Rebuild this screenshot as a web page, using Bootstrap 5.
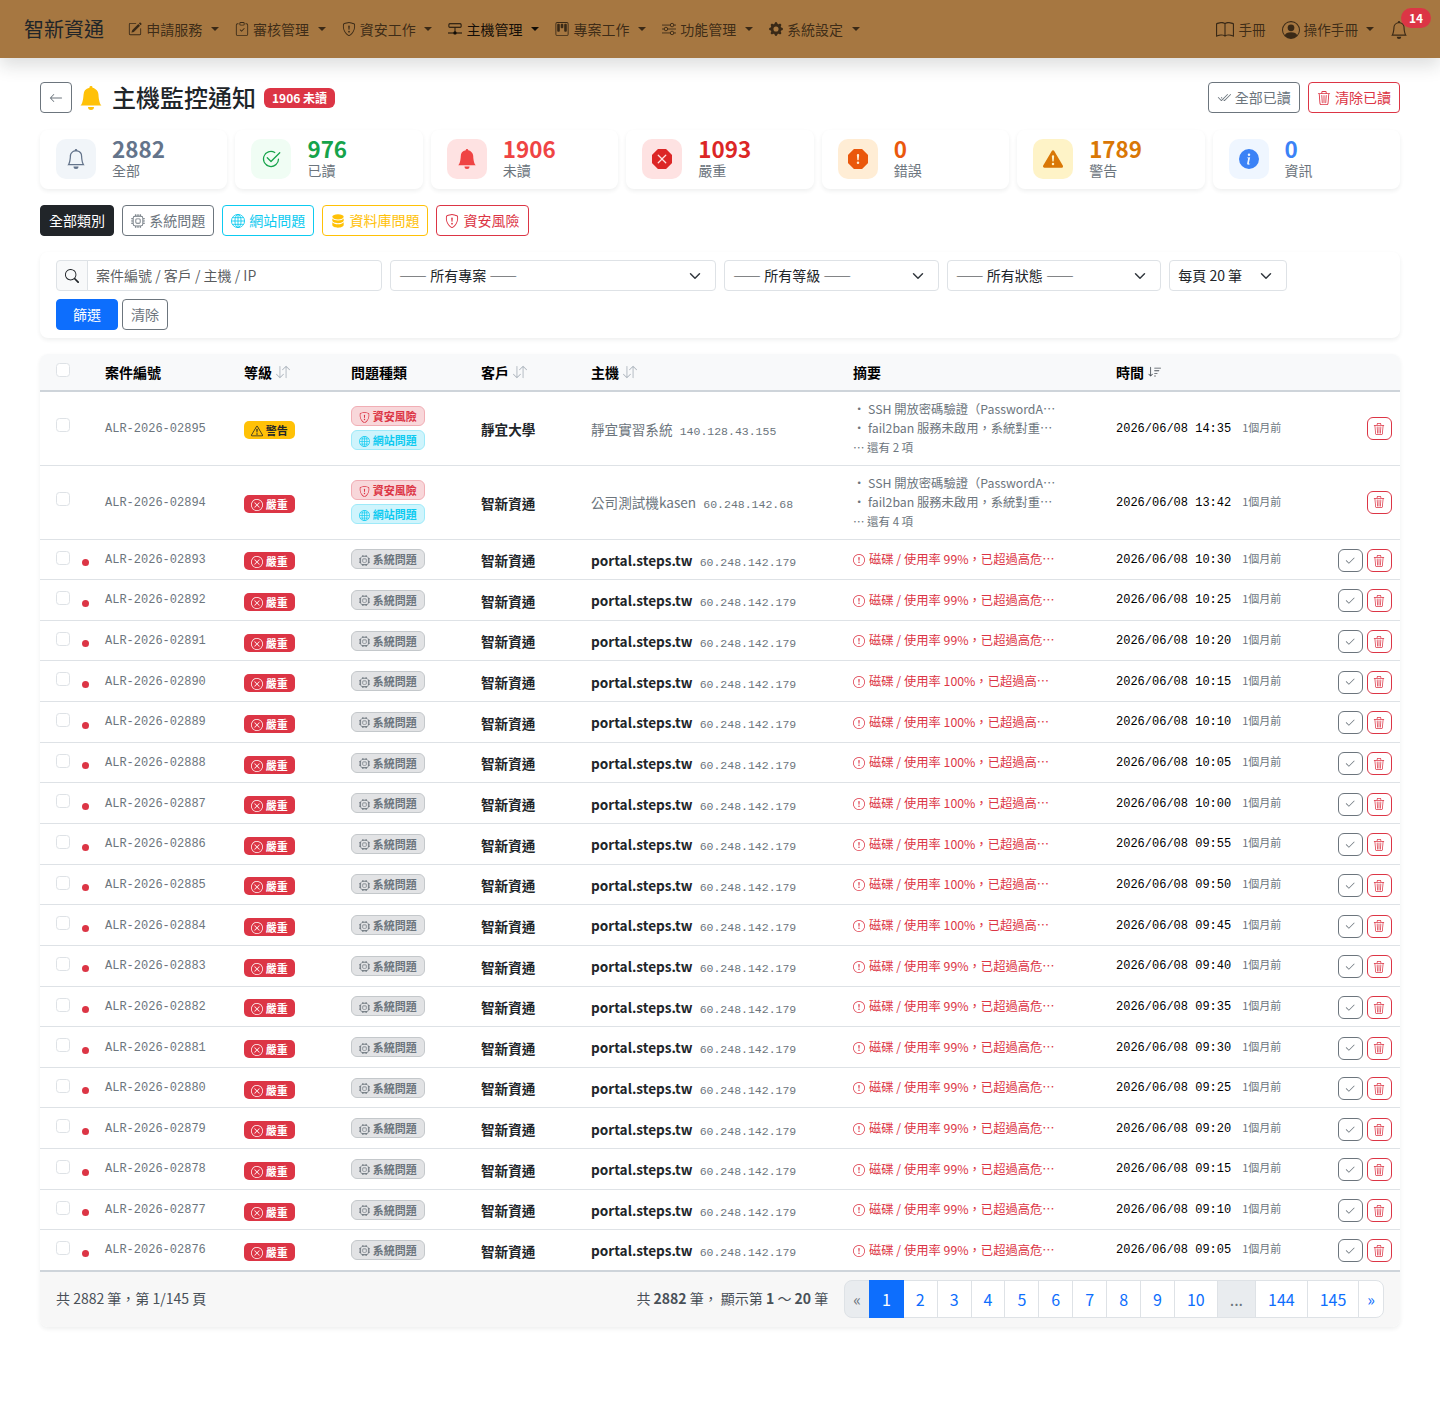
<!DOCTYPE html>
<html lang="zh-TW">

<head>
    <meta charset="UTF-8">
    <meta name="viewport" content="width=device-width, initial-scale=1.0">
    <title>主機監控通知</title>
    <link href="https://cdn.jsdelivr.net/npm/bootstrap@5.3.3/dist/css/bootstrap.min.css" rel="stylesheet">
    <style>
        body {
            background-color: #fff;
            font-family: "Noto Sans CJK TC", "Noto Sans", sans-serif;
            font-size: 14px;
        }

        .ic {
            width: 1em;
            height: 1em;
            fill: currentColor;
            vertical-align: -.125em;
        }

        .btn .ic {
            margin-right: 1px;
        }

        .btn .back-ic {
            margin-right: 0;
        }

        /* 導航列 */
        .top-bar {
            background-color: #a67741;
            height: 58px;
            padding: 0 24px;
        }

        .top-bar .navbar-brand {
            font-size: 20px;
            margin-right: 16px;
            padding: 0;
        }

        .top-bar .nav-link {
            font-size: 14px;
            padding: 8px;
            color: rgba(0, 0, 0, .65);
            white-space: nowrap;
        }

        .top-bar .nav-link.active {
            color: rgba(0, 0, 0, .9);
        }

        .top-bar .nav-link .ic {
            margin-right: 1px;
        }

        .top-bar .nav-link .nav-ic-lg {
            font-size: 18px;
            vertical-align: -4px;
        }

        .top-bar .dropdown-toggle::after {
            margin-left: 8.7px;
        }

        .top-bar .nav-side {
            margin-right: -1px;
        }

        .top-bar .nav-side .nav-link {
            font-size: 13.6px;
        }

        .top-bar .nav-side .dropdown-toggle::after {
            margin-left: 8px;
        }

        .bell-count {
            position: absolute;
            left: 19px;
            top: -3px;
            min-width: 30px;
            padding: 3px 8px;
            font-size: 12px;
            font-weight: 700;
            line-height: 14px;
            text-align: center;
            color: #fff;
            background-color: #dc3545;
            border-radius: 10px;
        }

        .page-wrap {
            padding: 24px 40px;
        }

        .title-row {
            margin-bottom: 17px;
        }

        .title-bell {
            font-size: 24px;
            color: #ffc107;
            margin: 0 9px 0 7px;
        }

        .page-title {
            font-size: 24px;
            font-weight: 500;
            line-height: 29px;
            margin: 0 0 2px;
            color: #212529;
        }

        .unread-tag {
            font-size: 12px;
            font-weight: 700;
            padding: 3px 8px;
            line-height: 14px;
            margin-left: 8px;
        }

        /* 統計卡片 */
        .stat-grid {
            display: grid;
            grid-template-columns: repeat(7, 1fr);
            gap: 8px;
        }

        .stat-card {
            border-radius: 8px;
            padding: 7px 16px 8px;
            background: #fff;
        }

        .stat-icon {
            width: 40px;
            height: 40px;
            border-radius: 10px;
            font-size: 20px;
        }

        .stat-text {
            margin-bottom: 2px;
        }

        .stat-num {
            font-size: 22.4px;
            font-weight: 700;
            line-height: 22px;
            margin-bottom: 2px;
        }

        .stat-label {
            font-size: 14px;
            line-height: 18px;
            color: #6c757d;
        }

        .filter-box {
            border-radius: 8px;
            padding: 8px 16px;
            background: #fff;
        }

        .filter-box .form-control,
        .filter-box .form-select,
        .filter-box .input-group-text {
            font-size: 14px;
        }

        .filter-box .input-group-text {
            background-color: #f8f9fa;
            color: #212529;
            padding: 4px 8px;
        }

        .filter-box .form-select {
            color: #212529;
        }

        .page-size {
            width: 118px;
        }

        .btn-go {
            width: 62px;
        }

        /* 表格 */
        .table-box {
            border-radius: 8px;
            overflow: hidden;
            background: #fff;
        }

        .alert-table {
            table-layout: fixed;
            width: 100%;
            margin: 0;
            font-size: 14px;
        }

        .alert-table th {
            background-color: #f8f9fa;
            font-weight: 700;
            padding: 7px 8px;
            border-bottom: 2px solid #ced4da;
            color: #000;
            height: 37px;
            vertical-align: middle;
        }

        .alert-table td {
            padding: 0 8px;
            vertical-align: middle;
            border-bottom: 1px solid #dee2e6;
            color: #212529;
        }

        .alert-table tr.row-short td {
            height: 40.65px;
        }

        .alert-table tr.row-tall td {
            height: 74px;
        }

        .alert-table tbody tr:last-child td {
            border-bottom: 2px solid #ced4da;
        }

        .sort-ic {
            color: #adb5bd;
            font-size: 14px;
            margin-left: 1px;
        }

        .sort-ic.on {
            color: #495057;
        }

        .alert-table .cell-check {
            padding: 0 0 0 16px;
            white-space: nowrap;
        }

        .alert-table th.cell-check {
            padding-bottom: 8px;
        }

        .row-short .cell-check {
            padding-bottom: 7px;
        }

        .row-tall .cell-check {
            padding-bottom: 10px;
        }

        .row-check {
            width: 14px;
            height: 14px;
            margin: 0;
            vertical-align: middle;
        }

        .unread-dot {
            display: inline-block;
            width: 7px;
            height: 7px;
            margin: 10px 0 0 12px;
            border-radius: 50%;
            background-color: #dc3545;
            vertical-align: middle;
        }

        .case-no {
            font-family: "Liberation Mono", monospace;
            font-size: 12px;
            color: #6c757d;
        }

        .alert-table td.case-cell {
            padding-bottom: 3px;
            color: #6c757d;
        }

        .level-tag {
            display: inline-block;
            width: 51px;
            height: 18px;
            border-radius: 5px;
            font-size: 11px;
            font-weight: 700;
            line-height: 18px;
            text-align: center;
        }

        .alert-table td.level-cell {
            padding-top: 3px;
        }

        .level-tag .ic {
            font-size: 12px;
            vertical-align: -2px;
        }

        .level-bad {
            background-color: #dc3545;
            color: #fff;
        }

        .level-warn {
            background-color: #ffc107;
            color: #212529;
        }

        .type-tag {
            display: block;
            width: 74px;
            height: 20px;
            border: 1px solid;
            border-radius: 6px;
            font-size: 11px;
            font-weight: 700;
            line-height: 18px;
            text-align: center;
        }

        .type-tag+.type-tag {
            margin-top: 4px;
        }

        .type-tag .ic {
            font-size: 11px;
            vertical-align: -1.5px;
        }

        .type-sys {
            background-color: #e2e3e5;
            border-color: #c4c8cb;
            color: #6c757d;
        }

        .type-web {
            background-color: #cff4fc;
            border-color: #9eeaf9;
            color: #0dcaf0;
        }

        .type-sec {
            background-color: #f8d7da;
            border-color: #f1aeb5;
            color: #dc3545;
        }

        .alert-table td.client-cell,
        .host-name {
            font-size: 13.6px;
        }

        .alert-table td.client-cell,
        .alert-table td.host-cell {
            padding-top: 2px;
        }

        .host-ip {
            font-family: "Liberation Mono", monospace;
            font-size: 11.5px;
            color: #6c757d;
            margin-left: 4px;
        }

        .host-off {
            color: #6c757d;
        }

        .sum-line {
            font-size: 12.3px;
            line-height: 19px;
            color: #6c757d;
            white-space: nowrap;
        }

        .sum-more {
            font-size: 11.5px;
        }

        .sum-bad {
            font-size: 12.3px;
            color: #dc3545;
            white-space: nowrap;
        }

        .sum-bad .ic {
            margin-right: 4px;
            font-size: 12px;
            vertical-align: -2px;
        }

        .time-text {
            font-family: "Liberation Mono", monospace;
            font-size: 12px;
            color: #000;
        }

        .ago-text {
            font-size: 11px;
            color: #6c757d;
            margin-left: 11px;
        }

        .alert-table td.time-cell {
            padding-bottom: 3px;
            white-space: nowrap;
        }

        .alert-table .row-short td.act-cell {
            padding-top: 2px;
        }

        .act-btn {
            width: 25px;
            height: 23px;
            padding: 0;
            font-size: 12px;
            line-height: 1;
            border-radius: 6px;
        }

        .table-foot {
            background-color: #f7f7f7;
            padding: 8px 16px 9px;
            color: #495057;
        }

        .foot-info {
            color: #495057;
            margin-right: 16px;
        }

        .foot-pages {
            --bs-pagination-disabled-bg: #e9ecef;
            --bs-pagination-disabled-color: #6c757d;
            --bs-pagination-border-radius: 8px;
        }

        .foot-pages .page-item:first-child .page-link,
        .foot-pages .page-item:last-child .page-link {
            padding-left: 8px;
            padding-right: 8px;
        }
    </style>
</head>

<body>
    <!-- 圖示 -->
    <svg class="d-none" xmlns="http://www.w3.org/2000/svg">
        <symbol id="i-bell" viewBox="0 0 16 16"><path d="M8 16a2 2 0 0 0 2-2H6a2 2 0 0 0 2 2M8 1.918l-.797.161A4 4 0 0 0 4 6c0 .628-.134 2.197-.459 3.742-.16.767-.376 1.566-.663 2.258h10.244c-.287-.692-.502-1.49-.663-2.258C12.134 8.197 12 6.628 12 6a4 4 0 0 0-3.203-3.92zM14.22 12c.223.447.481.801.78 1H1c.299-.199.557-.553.78-1C2.68 10.2 3 6.88 3 6c0-2.42 1.72-4.44 4.005-4.901a1 1 0 1 1 1.99 0A5 5 0 0 1 13 6c0 .88.32 4.2 1.22 6"/></symbol>
        <symbol id="i-bell-fill" viewBox="0 0 16 16"><path d="M8 16a2 2 0 0 0 2-2H6a2 2 0 0 0 2 2m.995-14.901a1 1 0 1 0-1.99 0A5 5 0 0 0 3 6c0 1.098-.5 6-2 7h14c-1.5-1-2-5.902-2-7 0-2.42-1.72-4.44-4.005-4.901"/></symbol>
        <symbol id="i-arrow-left" viewBox="0 0 16 16"><path d="M15 8a.5.5 0 0 0-.5-.5H2.707l3.147-3.146a.5.5 0 1 0-.708-.708l-4 4a.5.5 0 0 0 0 .708l4 4a.5.5 0 0 0 .708-.708L2.707 8.5H14.5A.5.5 0 0 0 15 8"/></symbol>
        <symbol id="i-check-all" viewBox="0 0 16 16"><path d="M12.354 4.354a.5.5 0 0 0-.708-.708L5 10.293 1.854 7.146a.5.5 0 1 0-.708.708l3.5 3.5a.5.5 0 0 0 .708 0zm-4.208 7-.896-.897.707-.707.543.543 6.646-6.647a.5.5 0 0 1 .708.708l-7 7a.5.5 0 0 1-.708 0"/><path d="m5.354 7.146.896.897-.707.707-.897-.896a.5.5 0 1 1 .708-.708"/></symbol>
        <symbol id="i-trash" viewBox="0 0 16 16"><path d="M6.5 1h3a.5.5 0 0 1 .5.5v1H6v-1a.5.5 0 0 1 .5-.5M11 2.5v-1A1.5 1.5 0 0 0 9.5 0h-3A1.5 1.5 0 0 0 5 1.5v1H1.5a.5.5 0 0 0 0 1h.538l.853 10.66A2 2 0 0 0 4.885 16h6.23a2 2 0 0 0 1.994-1.84l.853-10.66h.538a.5.5 0 0 0 0-1zm1.958 1-.846 10.58a1 1 0 0 1-.997.92h-6.23a1 1 0 0 1-.997-.92L3.042 3.5zm-7.487 1a.5.5 0 0 1 .528.47l.5 8.5a.5.5 0 0 1-.998.06L5 5.03a.5.5 0 0 1 .47-.53Zm5.058 0a.5.5 0 0 1 .47.53l-.5 8.5a.5.5 0 1 1-.998-.06l.5-8.5a.5.5 0 0 1 .528-.47M8 4.5a.5.5 0 0 1 .5.5v8.5a.5.5 0 0 1-1 0V5a.5.5 0 0 1 .5-.5"/></symbol>
        <symbol id="i-check-circle" viewBox="0 0 16 16"><path d="M2.5 8a5.5 5.5 0 0 1 8.25-4.764.5.5 0 0 0 .5-.866A6.5 6.5 0 1 0 14.5 8a.5.5 0 0 0-1 0 5.5 5.5 0 1 1-11 0"/><path d="M15.354 3.354a.5.5 0 0 0-.708-.708L8 9.293 5.354 6.646a.5.5 0 1 0-.708.708l3 3a.5.5 0 0 0 .708 0z"/></symbol>
        <symbol id="i-x-octagon" viewBox="0 0 16 16"><path d="M11.46.146A.5.5 0 0 0 11.107 0H4.893a.5.5 0 0 0-.353.146L.146 4.54A.5.5 0 0 0 0 4.893v6.214a.5.5 0 0 0 .146.353l4.394 4.394a.5.5 0 0 0 .353.146h6.214a.5.5 0 0 0 .353-.146l4.394-4.394a.5.5 0 0 0 .146-.353V4.893a.5.5 0 0 0-.146-.353zm-6.106 4.5L8 7.293l2.646-2.647a.5.5 0 0 1 .708.708L8.707 8l2.647 2.646a.5.5 0 0 1-.708.708L8 8.707l-2.646 2.647a.5.5 0 0 1-.708-.708L7.293 8 4.646 5.354a.5.5 0 1 1 .708-.708"/></symbol>
        <symbol id="i-ex-octagon" viewBox="0 0 16 16"><path d="M11.46.146A.5.5 0 0 0 11.107 0H4.893a.5.5 0 0 0-.353.146L.146 4.54A.5.5 0 0 0 0 4.893v6.214a.5.5 0 0 0 .146.353l4.394 4.394a.5.5 0 0 0 .353.146h6.214a.5.5 0 0 0 .353-.146l4.394-4.394a.5.5 0 0 0 .146-.353V4.893a.5.5 0 0 0-.146-.353zM8 4c.535 0 .954.462.9.995l-.35 3.507a.552.552 0 0 1-1.1 0L7.1 4.995A.905.905 0 0 1 8 4m.002 6a1 1 0 1 1 0 2 1 1 0 0 1 0-2"/></symbol>
        <symbol id="i-tri-fill" viewBox="0 0 16 16"><path d="M8.982 1.566a1.13 1.13 0 0 0-1.96 0L.165 13.233c-.457.778.091 1.767.98 1.767h13.713c.889 0 1.438-.99.98-1.767zM8 5c.535 0 .954.462.9.995l-.35 3.507a.552.552 0 0 1-1.1 0L7.1 5.995A.905.905 0 0 1 8 5m.002 6a1 1 0 1 1 0 2 1 1 0 0 1 0-2"/></symbol>
        <symbol id="i-info" viewBox="0 0 16 16"><path d="M8 16A8 8 0 1 0 8 0a8 8 0 0 0 0 16m.93-9.412-1 4.705c-.07.34.029.533.304.533.194 0 .487-.07.686-.246l-.088.416c-.287.346-.92.598-1.465.598-.703 0-1.002-.422-.808-1.319l.738-3.468c.064-.293.006-.399-.287-.47l-.451-.081.082-.381 2.29-.287zM8 5.5a1 1 0 1 1 0-2 1 1 0 0 1 0 2"/></symbol>
        <symbol id="i-cpu" viewBox="0 0 16 16"><path d="M5 0a.5.5 0 0 1 .5.5V2h1V.5a.5.5 0 0 1 1 0V2h1V.5a.5.5 0 0 1 1 0V2h1V.5a.5.5 0 0 1 1 0V2A2.5 2.5 0 0 1 14 4.5h1.5a.5.5 0 0 1 0 1H14v1h1.5a.5.5 0 0 1 0 1H14v1h1.5a.5.5 0 0 1 0 1H14v1h1.5a.5.5 0 0 1 0 1H14a2.5 2.5 0 0 1-2.5 2.5v1.5a.5.5 0 0 1-1 0V14h-1v1.5a.5.5 0 0 1-1 0V14h-1v1.5a.5.5 0 0 1-1 0V14h-1v1.5a.5.5 0 0 1-1 0V14A2.5 2.5 0 0 1 2 11.5H.5a.5.5 0 0 1 0-1H2v-1H.5a.5.5 0 0 1 0-1H2v-1H.5a.5.5 0 0 1 0-1H2v-1H.5a.5.5 0 0 1 0-1H2A2.5 2.5 0 0 1 4.5 2V.5A.5.5 0 0 1 5 0m-.5 3A1.5 1.5 0 0 0 3 4.5v7A1.5 1.5 0 0 0 4.5 13h7a1.5 1.5 0 0 0 1.5-1.5v-7A1.5 1.5 0 0 0 11.5 3zM5 6.5A1.5 1.5 0 0 1 6.5 5h3A1.5 1.5 0 0 1 11 6.5v3A1.5 1.5 0 0 1 9.5 11h-3A1.5 1.5 0 0 1 5 9.5zM6.5 6a.5.5 0 0 0-.5.5v3a.5.5 0 0 0 .5.5h3a.5.5 0 0 0 .5-.5v-3a.5.5 0 0 0-.5-.5z"/></symbol>
        <symbol id="i-globe" viewBox="0 0 16 16"><g fill="none" stroke="currentColor" stroke-width="1"><circle cx="8" cy="8" r="7.5"/><ellipse cx="8" cy="8" rx="3.5" ry="7.5"/><path d="M8 .5v15M.5 8h15M1.6 4.2h12.8M1.6 11.8h12.8"/></g></symbol>
        <symbol id="i-db" viewBox="0 0 16 16"><ellipse cx="8" cy="3.2" rx="6.5" ry="3"/><path d="M1.5 5.2v2.3c0 1.7 2.9 3 6.5 3s6.5-1.3 6.5-3V5.2C13.400 6.700 10.900 7.400 8 7.400S2.600 6.700 1.500 5.200"/><path d="M1.500 9.300v3.400c0 1.700 2.900 3 6.500 3s6.500-1.300 6.500-3V9.300c-1.100 1.500-3.600 2.300-6.500 2.300S2.600 10.800 1.500 9.300"/></symbol>
        <symbol id="i-shield" viewBox="0 0 16 16"><path d="M5.338 1.59a61 61 0 0 0-2.837.856.48.48 0 0 0-.328.39c-.554 4.157.726 7.19 2.253 9.188a10.700 10.700 0 0 0 2.287 2.233c.346.244.652.42.893.533q.18.085.293.118a1 1 0 0 0 .101.025 1 1 0 0 0 .1-.025q.114-.034.294-.118c.24-.113.547-.29.893-.533a10.700 10.700 0 0 0 2.287-2.233c1.527-1.997 2.807-5.031 2.253-9.188a.48.48 0 0 0-.328-.39c-.651-.213-1.750-.56-2.837-.855C9.552 1.290 8.531 1.067 8 1.067c-.53 0-1.552.223-2.662.524zM5.072.56C6.157.265 7.310 0 8 0s1.843.265 2.928.56c1.110.3 2.229.655 2.887.87a1.540 1.540 0 0 1 1.044 1.262c.596 4.477-.787 7.795-2.465 9.990a11.800 11.800 0 0 1-2.517 2.453 7 7 0 0 1-1.048.625c-.28.132-.581.24-.829.24s-.548-.108-.829-.24a7 7 0 0 1-1.048-.625 11.800 11.800 0 0 1-2.517-2.453C1.928 10.487.545 7.169 1.141 2.692A1.540 1.540 0 0 1 2.185 1.430 63 63 0 0 1 5.072.56"/><path d="M7.001 11a1 1 0 1 1 2 0 1 1 0 0 1-2 0M7.100 4.995a.905.905 0 1 1 1.800 0l-.35 3.507a.553.553 0 0 1-1.100 0z"/></symbol>
        <symbol id="i-search" viewBox="0 0 16 16"><path d="M11.742 10.344a6.500 6.500 0 1 0-1.397 1.398h-.001q.044.06.098.115l3.850 3.850a1 1 0 0 0 1.415-1.414l-3.850-3.850a1 1 0 0 0-.115-.1zM12 6.500a5.500 5.500 0 1 1-11 0 5.500 5.500 0 0 1 11 0"/></symbol>
        <symbol id="i-tri" viewBox="0 0 16 16"><path d="M7.938 2.016A.13.13 0 0 1 8.002 2a.13.13 0 0 1 .063.016.15.15 0 0 1 .054.057l6.857 11.667c.036.06.035.124.002.183a.2.2 0 0 1-.054.06.1.1 0 0 1-.066.017H1.146a.1.1 0 0 1-.066-.017.2.2 0 0 1-.054-.06.18.18 0 0 1 .002-.183L7.884 2.073a.15.15 0 0 1 .054-.057m1.044-.45a1.130 1.130 0 0 0-1.960 0L.165 13.233c-.457.778.091 1.767.98 1.767h13.713c.889 0 1.438-.99.98-1.767z"/><path d="M7.002 12a1 1 0 1 1 2 0 1 1 0 0 1-2 0M7.100 5.995a.905.905 0 1 1 1.800 0l-.35 3.507a.552.552 0 0 1-1.100 0z"/></symbol>
        <symbol id="i-x-circle" viewBox="0 0 16 16"><path d="M8 15A7 7 0 1 1 8 1a7 7 0 0 1 0 14m0 1A8 8 0 1 0 8 0a8 8 0 0 0 0 16"/><path d="M4.646 4.646a.5.5 0 0 1 .708 0L8 7.293l2.646-2.647a.5.5 0 0 1 .708.708L8.707 8l2.647 2.646a.5.5 0 0 1-.708.708L8 8.707l-2.646 2.647a.5.5 0 0 1-.708-.708L7.293 8 4.646 5.354a.5.5 0 0 1 0-.708"/></symbol>
        <symbol id="i-ex-circle" viewBox="0 0 16 16"><path d="M8 15A7 7 0 1 1 8 1a7 7 0 0 1 0 14m0 1A8 8 0 1 0 8 0a8 8 0 0 0 0 16"/><path d="M7.002 11a1 1 0 1 1 2 0 1 1 0 0 1-2 0M7.100 4.995a.905.905 0 1 1 1.800 0l-.35 3.507a.552.552 0 0 1-1.100 0z"/></symbol>
        <symbol id="i-check" viewBox="0 0 16 16"><path d="M13.854 3.646a.5.5 0 0 1 0 .708l-7 7a.5.5 0 0 1-.708 0l-3.500-3.500a.5.5 0 1 1 .708-.708L6.500 10.293l6.646-6.647a.5.5 0 0 1 .708 0"/></symbol>
        <symbol id="i-sort" viewBox="0 0 16 16"><path d="M11.500 15a.5.5 0 0 0 .5-.5V2.707l3.146 3.147a.5.5 0 0 0 .708-.708l-4-4a.5.5 0 0 0-.708 0l-4 4a.5.5 0 1 0 .708.708L11 2.707V14.500a.5.5 0 0 0 .5.5m-7-14a.5.5 0 0 1 .5.5v11.793l3.146-3.147a.5.5 0 0 1 .708.708l-4 4a.5.5 0 0 1-.708 0l-4-4a.5.5 0 0 1 .708-.708L4 13.293V1.500a.5.5 0 0 1 .5-.5"/></symbol>
        <symbol id="i-sort-down" viewBox="0 0 16 16"><path d="M3.500 2.500a.5.5 0 0 0-1 0v8.793l-1.146-1.147a.5.5 0 0 0-.708.708l2 1.999.007.007a.497.497 0 0 0 .7-.006l2-2a.5.5 0 0 0-.707-.708L3.500 11.293zm3.500 1a.5.5 0 0 1 .5-.5h7a.5.5 0 0 1 0 1h-7a.5.5 0 0 1-.5-.5M7.500 6a.5.5 0 0 0 0 1h5a.5.5 0 0 0 0-1zm0 3a.5.5 0 0 0 0 1h3a.5.5 0 0 0 0-1zm0 3a.5.5 0 0 0 0 1h1a.5.5 0 0 0 0-1z"/></symbol>
        <symbol id="i-pencil" viewBox="0 0 16 16"><path d="M15.502 1.940a.5.5 0 0 1 0 .706L14.459 3.690l-2-2L13.502.646a.5.5 0 0 1 .707 0l1.293 1.293zm-1.750 2.456-2-2L4.939 9.210a.5.5 0 0 0-.121.196l-.805 2.414a.25.25 0 0 0 .316.316l2.414-.805a.5.5 0 0 0 .196-.12l6.813-6.814z"/><path d="M1 13.500A1.500 1.500 0 0 0 2.500 15h11a1.500 1.500 0 0 0 1.500-1.500v-6a.5.5 0 0 0-1 0v6a.5.5 0 0 1-.5.5h-11a.5.5 0 0 1-.5-.5v-11a.5.5 0 0 1 .5-.5H9a.5.5 0 0 0 0-1H2.500A1.500 1.500 0 0 0 1 2.500z"/></symbol>
        <symbol id="i-clip" viewBox="0 0 16 16"><path d="M10.854 7.146a.5.5 0 0 1 0 .708l-3 3a.5.5 0 0 1-.708 0l-1.500-1.500a.5.5 0 1 1 .708-.708L7.500 9.793l2.646-2.647a.5.5 0 0 1 .708 0"/><path d="M4 1.500H3a2 2 0 0 0-2 2V14a2 2 0 0 0 2 2h10a2 2 0 0 0 2-2V3.500a2 2 0 0 0-2-2h-1v1h1a1 1 0 0 1 1 1V14a1 1 0 0 1-1 1H3a1 1 0 0 1-1-1V3.500a1 1 0 0 1 1-1h1z"/><path d="M9.500 1a.5.5 0 0 1 .5.5v1a.5.5 0 0 1-.5.5h-3a.5.5 0 0 1-.5-.5v-1a.5.5 0 0 1 .5-.5zm-3-1A1.500 1.500 0 0 0 5 1.500v1A1.500 1.500 0 0 0 6.500 4h3A1.500 1.500 0 0 0 11 2.500v-1A1.500 1.500 0 0 0 9.500 0z"/></symbol>
        <symbol id="i-hdd" viewBox="0 0 16 16"><path d="M2 1.500h12a1.500 1.500 0 0 1 1.500 1.500v2A1.500 1.500 0 0 1 14 6.500H2A1.500 1.500 0 0 1 .5 5V3A1.500 1.500 0 0 1 2 1.500M2 2.500a.5.5 0 0 0-.5.5v2a.5.5 0 0 0 .5.5h12a.5.5 0 0 0 .5-.5V3a.5.5 0 0 0-.5-.5z"/><path d="M7.500 6.500h1v4.100a2 2 0 0 1 1.400 1.400H16v1H9.900a2 2 0 0 1-3.800 0H0v-1h6.100a2 2 0 0 1 1.400-1.400z"/></symbol>
        <symbol id="i-kanban" viewBox="0 0 16 16"><path d="M13.500 1a1 1 0 0 1 1 1v12a1 1 0 0 1-1 1h-11a1 1 0 0 1-1-1V2a1 1 0 0 1 1-1zm-11-1a2 2 0 0 0-2 2v12a2 2 0 0 0 2 2h11a2 2 0 0 0 2-2V2a2 2 0 0 0-2-2z"/><path d="M6.500 3a1 1 0 0 1 1-1h1a1 1 0 0 1 1 1v3a1 1 0 0 1-1 1h-1a1 1 0 0 1-1-1zm-4 0a1 1 0 0 1 1-1h1a1 1 0 0 1 1 1v7a1 1 0 0 1-1 1h-1a1 1 0 0 1-1-1zm8 0a1 1 0 0 1 1-1h1a1 1 0 0 1 1 1v7a1 1 0 0 1-1 1h-1a1 1 0 0 1-1-1z"/></symbol>
        <symbol id="i-sliders" viewBox="0 0 16 16"><g fill="none" stroke="currentColor"><path d="M0 3.500h9.500M13.500 3.500H16M0 8h2.500M6.500 8H16M0 12.500h9.500M13.500 12.500H16"/><circle cx="11.500" cy="3.500" r="2"/><circle cx="4.500" cy="8" r="2"/><circle cx="11.500" cy="12.500" r="2"/></g></symbol>
        <symbol id="i-gear" viewBox="0 0 16 16"><path d="M9.405 1.050c-.413-1.400-2.397-1.400-2.810 0l-.1.340a1.464 1.464 0 0 1-2.105.872l-.31-.17c-1.283-.698-2.686.705-1.987 1.987l.169.311c.446.82.023 1.841-.872 2.105l-.34.1c-1.400.413-1.400 2.397 0 2.810l.34.1a1.464 1.464 0 0 1 .872 2.105l-.17.31c-.698 1.283.705 2.686 1.987 1.987l.311-.169a1.464 1.464 0 0 1 2.105.872l.1.340c.413 1.400 2.397 1.400 2.810 0l.1-.34a1.464 1.464 0 0 1 2.105-.872l.31.17c1.283.698 2.686-.705 1.987-1.987l-.169-.311a1.464 1.464 0 0 1 .872-2.105l.34-.1c1.400-.413 1.400-2.397 0-2.810l-.34-.1a1.464 1.464 0 0 1-.872-2.105l.17-.31c.698-1.283-.705-2.686-1.987-1.987l-.311.169a1.464 1.464 0 0 1-2.105-.872zM8 10.930a2.929 2.929 0 1 1 0-5.860 2.929 2.929 0 0 1 0 5.858z"/></symbol>
        <symbol id="i-book" viewBox="0 0 16 16"><path d="M1 2.828c.885-.37 2.154-.769 3.388-.893 1.330-.134 2.458.063 3.112.752v9.746c-.935-.53-2.120-.603-3.213-.493-1.180.12-2.370.461-3.287.811zm7.500-.141c.654-.689 1.782-.886 3.112-.752 1.234.124 2.503.523 3.388.893v9.923c-.918-.35-2.107-.692-3.287-.81-1.094-.111-2.278-.039-3.213.492zM8 1.783C7.015.936 5.587.81 4.287.94c-1.514.153-3.042.672-3.994 1.105A.5.5 0 0 0 0 2.500v11a.5.5 0 0 0 .707.455c.882-.4 2.303-.881 3.680-1.020 1.409-.142 2.590.087 3.223.877a.5.5 0 0 0 .78 0c.633-.79 1.814-1.019 3.222-.877 1.378.139 2.800.62 3.681 1.020A.5.5 0 0 0 16 13.500v-11a.5.5 0 0 0-.293-.455c-.952-.433-2.480-.952-3.994-1.105C10.413.809 8.985.936 8 1.783"/></symbol>
        <symbol id="i-person" viewBox="0 0 16 16"><path d="M11 6a3 3 0 1 1-6 0 3 3 0 0 1 6 0"/><path d="M0 8a8 8 0 1 1 16 0A8 8 0 0 1 0 8m8-7a7 7 0 0 0-5.468 11.370C3.242 11.226 4.805 10 8 10s4.757 1.225 5.468 2.370A7 7 0 0 0 8 1"/></symbol>
    </svg>

    <!-- 導航列 -->
    <nav class="navbar navbar-expand top-bar shadow p-0 px-4">
        <a class="navbar-brand text-dark" href="#">智新資通</a>
        <ul class="navbar-nav me-auto">
            <li class="nav-item"><a class="nav-link dropdown-toggle" href="#"><svg class="ic"><use href="#i-pencil"/></svg> 申請服務</a></li>
            <li class="nav-item"><a class="nav-link dropdown-toggle" href="#"><svg class="ic"><use href="#i-clip"/></svg> 審核管理</a></li>
            <li class="nav-item"><a class="nav-link dropdown-toggle" href="#"><svg class="ic"><use href="#i-shield"/></svg> 資安工作</a></li>
            <li class="nav-item"><a class="nav-link active dropdown-toggle" href="#"><svg class="ic"><use href="#i-hdd"/></svg> 主機管理</a></li>
            <li class="nav-item"><a class="nav-link dropdown-toggle" href="#"><svg class="ic"><use href="#i-kanban"/></svg> 專案工作</a></li>
            <li class="nav-item"><a class="nav-link dropdown-toggle" href="#"><svg class="ic"><use href="#i-sliders"/></svg> 功能管理</a></li>
            <li class="nav-item"><a class="nav-link dropdown-toggle" href="#"><svg class="ic"><use href="#i-gear"/></svg> 系統設定</a></li>
        </ul>
        <ul class="navbar-nav nav-side align-items-center">
            <li class="nav-item"><a class="nav-link" href="#"><svg class="ic nav-ic-lg"><use href="#i-book"/></svg> 手冊</a></li>
            <li class="nav-item"><a class="nav-link dropdown-toggle" href="#"><svg class="ic nav-ic-lg"><use href="#i-person"/></svg> 操作手冊</a></li>
            <li class="nav-item position-relative">
                <a class="nav-link" href="#"><svg class="ic nav-ic-lg"><use href="#i-bell"/></svg></a>
                <span class="bell-count">14</span>
            </li>
        </ul>
    </nav>

    <main class="page-wrap">
        <!-- 標題 -->
        <div class="d-flex align-items-center justify-content-between title-row">
            <div class="d-flex align-items-center">
                <a class="btn btn-sm btn-outline-secondary" href="#"><svg class="ic back-ic"><use href="#i-arrow-left"/></svg></a>
                <svg class="ic title-bell"><use href="#i-bell-fill"/></svg>
                <h1 class="page-title">主機監控通知</h1>
                <span class="badge text-bg-danger unread-tag">1906 未讀</span>
            </div>
            <div class="d-flex gap-2">
                <button class="btn btn-sm btn-outline-secondary" type="button"><svg class="ic"><use href="#i-check-all"/></svg> 全部已讀</button>
                <button class="btn btn-sm btn-outline-danger" type="button"><svg class="ic"><use href="#i-trash"/></svg> 清除已讀</button>
            </div>
        </div>

        <!-- 統計 -->
        <div class="stat-grid mb-3" id="statGrid"></div>

        <!-- 類別 -->
        <div class="d-flex gap-2 mb-3">
            <a class="btn btn-sm btn-dark" href="#">全部類別</a>
            <a class="btn btn-sm btn-outline-secondary" href="#"><svg class="ic"><use href="#i-cpu"/></svg> 系統問題</a>
            <a class="btn btn-sm btn-outline-info" href="#"><svg class="ic"><use href="#i-globe"/></svg> 網站問題</a>
            <a class="btn btn-sm btn-outline-warning" href="#"><svg class="ic"><use href="#i-db"/></svg> 資料庫問題</a>
            <a class="btn btn-sm btn-outline-danger" href="#"><svg class="ic"><use href="#i-shield"/></svg> 資安風險</a>
        </div>

        <!-- 篩選 -->
        <form class="filter-box shadow-sm mb-3">
            <div class="row g-2">
                <div class="col-3">
                    <div class="input-group input-group-sm">
                        <span class="input-group-text"><svg class="ic"><use href="#i-search"/></svg></span>
                        <input class="form-control" type="text" placeholder="案件編號 / 客戶 / 主機 / IP">
                    </div>
                </div>
                <div class="col-3"><select class="form-select form-select-sm"><option>—— 所有專案 ——</option></select></div>
                <div class="col-2"><select class="form-select form-select-sm"><option>—— 所有等級 ——</option></select></div>
                <div class="col-2"><select class="form-select form-select-sm"><option>—— 所有狀態 ——</option></select></div>
                <div class="col-auto"><select class="form-select form-select-sm page-size"><option>每頁 20 筆</option></select></div>
                <div class="col-12 d-flex gap-1">
                    <button class="btn btn-sm btn-primary btn-go" type="button">篩選</button>
                    <button class="btn btn-sm btn-outline-secondary" type="button">清除</button>
                </div>
            </div>
        </form>

        <!-- 列表 -->
        <div class="table-box shadow-sm">
            <table class="alert-table">
                <colgroup>
                    <col style="width:57px"><col style="width:139px"><col style="width:107px"><col style="width:130px">
                    <col style="width:110px"><col style="width:262px"><col style="width:263px"><col style="width:192px"><col>
                </colgroup>
                <thead>
                    <tr>
                        <th class="cell-check"><input class="form-check-input row-check header-check" type="checkbox"></th>
                        <th>案件編號</th>
                        <th>等級 <svg class="ic sort-ic"><use href="#i-sort"/></svg></th>
                        <th>問題種類</th>
                        <th>客戶 <svg class="ic sort-ic"><use href="#i-sort"/></svg></th>
                        <th>主機 <svg class="ic sort-ic"><use href="#i-sort"/></svg></th>
                        <th>摘要</th>
                        <th>時間 <svg class="ic sort-ic on"><use href="#i-sort-down"/></svg></th>
                        <th></th>
                    </tr>
                </thead>
                <tbody id="alertBody"></tbody>
            </table>
            <div class="table-foot d-flex align-items-center justify-content-between">
                <span>共 2882 筆，第 1/145 頁</span>
                <div class="d-flex align-items-center">
                    <span class="foot-info">共 <b>2882</b> 筆， 顯示第 <b>1</b> ～ <b>20</b> 筆</span>
                    <ul class="pagination foot-pages m-0" id="pager"></ul>
                </div>
            </div>
        </div>
    </main>

    <script src="https://cdn.jsdelivr.net/npm/bootstrap@5.3.3/dist/js/bootstrap.bundle.min.js"></script>
    <script>
        const icon = name => `<svg class="ic"><use href="#i-${name}"/></svg>`;

        const stats = [
            ['2882', '全部', 'bell', '#64748b', '#f1f5f9'],
            ['976', '已讀', 'check-circle', '#16a34a', '#f0fdf4'],
            ['1906', '未讀', 'bell-fill', '#ef4444', '#fee2e2'],
            ['1093', '嚴重', 'x-octagon', '#dc2626', '#fee2e2'],
            ['0', '錯誤', 'ex-octagon', '#ea580c', '#ffedd5'],
            ['1789', '警告', 'tri-fill', '#d97706', '#fef3c7'],
            ['0', '資訊', 'info', '#3b82f6', '#eff6ff']
        ];

        document.getElementById('statGrid').innerHTML = stats.map(s => `
            <div class="stat-card shadow-sm d-flex align-items-center gap-3">
                <div class="stat-icon d-flex align-items-center justify-content-center" style="background-color:${s[4]};color:${s[3]}">${icon(s[2])}</div>
                <div class="stat-text">
                    <div class="stat-num" style="color:${s[3]}">${s[0]}</div>
                    <div class="stat-label">${s[1]}</div>
                </div>
            </div>`).join('');

        const sysTag = `<span class="type-tag type-sys">${icon('cpu')} 系統問題</span>`;
        const secTags = `<span class="type-tag type-sec">${icon('shield')} 資安風險</span><span class="type-tag type-web">${icon('globe')} 網站問題</span>`;
        const badTag = `<span class="level-tag level-bad">${icon('x-circle')} 嚴重</span>`;
        const warnTag = `<span class="level-tag level-warn">${icon('tri')} 警告</span>`;
        const trashBtn = `<button class="btn btn-outline-danger act-btn" type="button">${icon('trash')}</button>`;
        const readBtn = `<button class="btn btn-outline-secondary act-btn" type="button">${icon('check')}</button>`;

        const sshSummary = more => `
            <div class="sum-line">・ SSH 開放密碼驗證（PasswordA…</div>
            <div class="sum-line">・ fail2ban 服務未啟用，系統對重…</div>
            <div class="sum-line sum-more">… 還有 ${more} 項</div>`;

        const rows = [
            { no: '02895', level: warnTag, type: secTags, client: '靜宜大學', host: '靜宜實習系統', ip: '140.128.43.155', sum: sshSummary(2), time: '14:35', tall: true },
            { no: '02894', level: badTag, type: secTags, client: '智新資通', host: '公司測試機kasen', ip: '60.248.142.68', sum: sshSummary(4), time: '13:42', tall: true }
        ];

        [['02893', '10:30', 99], ['02892', '10:25', 99], ['02891', '10:20', 99], ['02890', '10:15', 100], ['02889', '10:10', 100],
         ['02888', '10:05', 100], ['02887', '10:00', 100], ['02886', '09:55', 100], ['02885', '09:50', 100], ['02884', '09:45', 100],
         ['02883', '09:40', 99], ['02882', '09:35', 99], ['02881', '09:30', 99], ['02880', '09:25', 99], ['02879', '09:20', 99],
         ['02878', '09:15', 99], ['02877', '09:10', 99], ['02876', '09:05', 99]].forEach(r => {
            const text = r[2] === 99 ? '磁碟 / 使用率 99%，已超過高危…' : '磁碟 / 使用率 100%，已超過高…';
            rows.push({
                no: r[0], level: badTag, type: sysTag, client: '智新資通', host: 'portal.steps.tw', ip: '60.248.142.179',
                sum: `<div class="sum-bad">${icon('ex-circle')}${text}</div>`, time: r[1], tall: false
            });
        });

        document.getElementById('alertBody').innerHTML = rows.map(r => `
            <tr class="${r.tall ? 'row-tall' : 'row-short'}">
                <td class="cell-check"><input class="form-check-input row-check" type="checkbox">${r.tall ? '' : '<span class="unread-dot"></span>'}</td>
                <td class="case-cell"><span class="case-no">ALR-2026-${r.no}</span></td>
                <td class="level-cell">${r.level}</td>
                <td>${r.type}</td>
                <td class="fw-bold client-cell">${r.client}</td>
                <td class="host-cell"><span class="host-name ${r.tall ? 'host-off' : 'fw-bold'}">${r.host}</span> <span class="host-ip">${r.ip}</span></td>
                <td>${r.sum}</td>
                <td class="time-cell"><span class="time-text">2026/06/08 ${r.time}</span><span class="ago-text">1個月前</span></td>
                <td class="act-cell"><div class="d-flex justify-content-end gap-1">${r.tall ? '' : readBtn}${trashBtn}</div></td>
            </tr>`).join('');

        const pages = [['«', 'disabled'], ['1', 'active'], ['2'], ['3'], ['4'], ['5'], ['6'], ['7'], ['8'], ['9'], ['10'], ['...', 'disabled'], ['144'], ['145'], ['»']];
        document.getElementById('pager').innerHTML = pages.map(p =>
            `<li class="page-item ${p[1] || ''}"><a class="page-link" href="#">${p[0]}</a></li>`).join('');
    </script>
</body>

</html>
